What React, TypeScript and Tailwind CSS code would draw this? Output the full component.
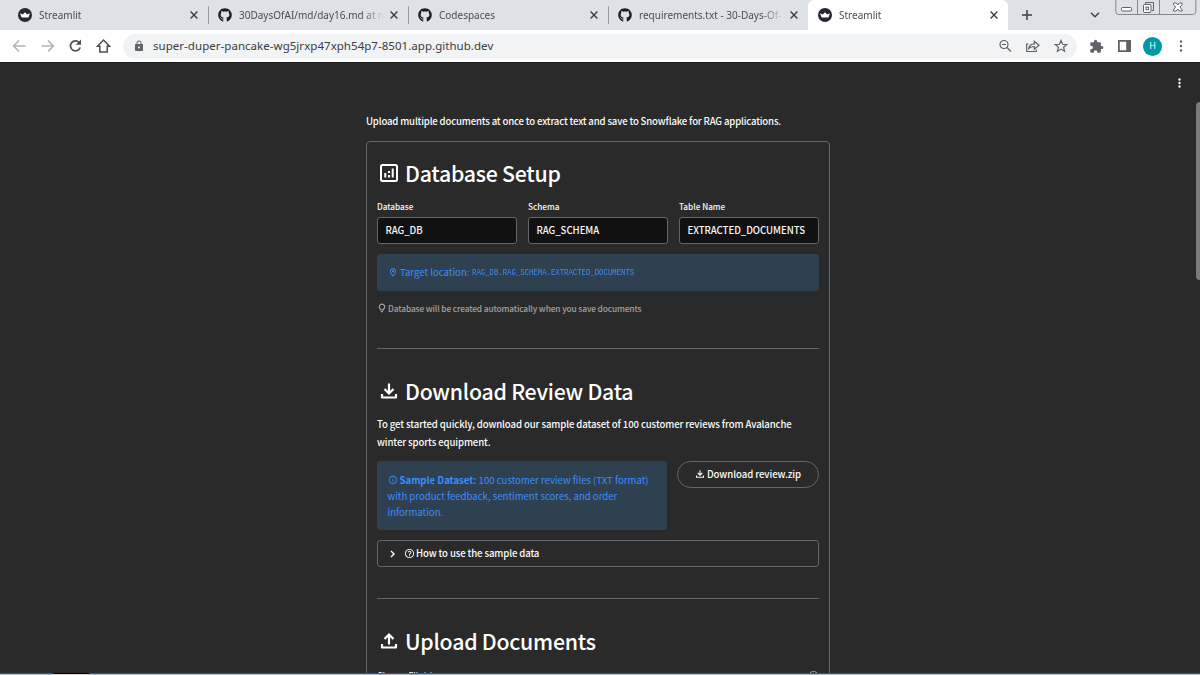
import type { ReactNode } from "react";
import { FaGithub } from "react-icons/fa";
import {
  MdExtension,
  MdHelpOutline,
  MdLock,
  MdOutlineInfo,
  MdOutlineLocationOn,
} from "react-icons/md";

type TabInfo = {
  title: string;
  icon: "streamlit" | "github";
  active?: boolean;
};

const tabs: TabInfo[] = [
  { title: "Streamlit", icon: "streamlit" },
  { title: "30DaysOfAI/md/day16.md at n", icon: "github" },
  { title: "Codespaces", icon: "github" },
  { title: "requirements.txt - 30-Days-Of-", icon: "github" },
  { title: "Streamlit", icon: "streamlit", active: true },
];

const fields = [
  { label: "Database", value: "RAG_DB" },
  { label: "Schema", value: "RAG_SCHEMA" },
  { label: "Table Name", value: "EXTRACTED_DOCUMENTS" },
];

function CrownIcon() {
  return (
    <svg viewBox="0 0 14 14" className="h-[14px] w-[14px] shrink-0">
      <circle cx="7" cy="7" r="7" fill="#262730" />
      <path d="M2 5.200 4.800 6.400 7 4.200l2.200 2.200L12 5.200l-1.600 4.300H3.600z" fill="#fff" />
    </svg>
  );
}

function CloseIcon() {
  return (
    <svg viewBox="0 0 8 8" className="h-2 w-2 shrink-0" fill="none" stroke="#3c4043" strokeWidth="1.400">
      <path d="M.6.6l6.800 6.800M7.400.6.6 7.400" />
    </svg>
  );
}

function AnalyticsIcon() {
  return (
    <svg viewBox="0 0 20 20" className="h-5 w-5" fill="none" stroke="currentColor" strokeWidth="2">
      <rect x="2" y="2" width="16" height="16" rx="1.500" />
      <path d="M6.300 10v4.500M13.700 5.500v9M10 12v2.500M10 8v2" />
    </svg>
  );
}

function TrayIcon({ up, className }: { up?: boolean; className: string }) {
  return (
    <svg viewBox="0 0 20 20" className={className} fill="none" stroke="currentColor" strokeWidth="2.200">
      <path d={up ? "M10 13.500V4M5.500 8 10 3.500 14.500 8" : "M10 2.500V12M5.500 8 10 12.500 14.500 8"} />
      <path d="M3 13v3.500h14V13" strokeLinejoin="round" />
    </svg>
  );
}

function Tab({ tab }: { tab: TabInfo }) {
  return (
    <div
      className={
        tab.active
          ? "flex h-[30px] w-[200px] items-center rounded-t-[6px] bg-white px-[10px]"
          : "flex h-[30px] w-[200px] items-center px-[10px]"
      }
    >
      {tab.icon === "github" ? (
        <FaGithub className="h-[14px] w-[14px] shrink-0 text-[#1b1f23]" />
      ) : (
        <CrownIcon />
      )}
      <span className="ml-[7px] w-[147px] shrink-0 whitespace-nowrap text-[10px] leading-[16px] text-[#4a4d51] [mask-image:linear-gradient(to_right,black_122px,transparent_146px)]">
        {tab.title}
      </span>
      <span className="ml-[4px]">
        <CloseIcon />
      </span>
    </div>
  );
}

function WindowControls() {
  return (
    <svg viewBox="0 0 84 16" className="h-4 w-[84px]" fill="none" stroke="#85888d">
      <path d="M.8 0v11.500q0 3 3 3h74q3 0 3-3V0M22.500 0v14.500M44.500 0v14.500" />
      <g stroke="#5f6368">
        <rect x="6.500" y="7.500" width="10" height="3.500" rx="1" fill="#fff" />
        <path d="M30.500 4v-1.500h8v8H37" />
        <rect x="28.500" y="4.500" width="7.500" height="8" rx="1" fill="#fff" />
        <rect x="31" y="7.200" width="2.500" height="2.500" />
        <path
          d="M58.500 3h2.700l1.600 2 1.600-2h2.700v1.500L65 7l2.100 2.700V11h-2.700l-1.600-2-1.600 2h-2.700V9.700L60.600 7l-2.100-2.500z"
          fill="#fff"
        />
      </g>
    </svg>
  );
}

function TabStrip() {
  return (
    <div className="flex h-[30px] bg-[#dee1e6] pl-2">
      {tabs.map((tab, i) => (
        <div key={i} className="relative">
          <Tab tab={tab} />
          {i < 3 && <span className="absolute right-[-1px] top-[6px] h-[18px] w-px bg-[#9a9da1]" />}
        </div>
      ))}
      <svg viewBox="0 0 10 10" className="ml-[14px] mt-[10px] h-[10px] w-[10px]" stroke="#3c4043" strokeWidth="1.500">
        <path d="M5 0v10M0 5h10" />
      </svg>
      <svg
        viewBox="0 0 10 6"
        className="ml-[58px] mt-[12px] h-[6px] w-[10px]"
        fill="none"
        stroke="#3c4043"
        strokeWidth="1.500"
      >
        <path d="M1 .8l4 4 4-4" />
      </svg>
      <div className="ml-[15px]">
        <WindowControls />
      </div>
    </div>
  );
}

function Toolbar() {
  return (
    <div className="flex h-8 items-center bg-white pl-[12px]">
      <svg viewBox="0 0 100 18" className="h-[18px] w-[100px] shrink-0" fill="none" strokeWidth="1.500">
        <g stroke="#b0b2b5">
          <path d="M13.500 9H2M7 3.500 1.500 9 7 14.500M29.500 9H41M36 3.500 41.500 9 36 14.500" />
        </g>
        <g stroke="#4b4e52">
          <path d="M67.200 5.500A5 5 0 1 0 68.200 10.500" strokeWidth="1.700" />
          <path d="M69 2.500v5.200h-5.200z" fill="#4b4e52" stroke="none" />
          <path d="M85.500 9.300 91.500 3l6 6.300h-2.300V15h-7.400V9.300z" />
        </g>
      </svg>
      <div className="ml-[11px] flex h-[25px] w-[954px] items-center rounded-full bg-[#f1f3f4] pl-[10px] pr-[8px]">
        <MdLock className="h-[12px] w-[12px] text-[#5f6368]" />
        <span className="ml-[8px] whitespace-nowrap text-[11.500px] leading-[16px] tracking-[0.040px] text-[#3a3d41]">
          super-duper-pancake-wg5jrxp47xph54p7-8501.app.github.dev
        </span>
        <svg viewBox="0 0 70 14" className="ml-auto h-[14px] w-[70px]" fill="none" stroke="#5f6368" strokeWidth="1.200">
          <circle cx="5" cy="5.500" r="4" />
          <path d="M3 5.500h4M8 8.500l4 4M29.500 5H27.700v7.500h9.500V10.500M29.800 9.500c.5-3 2.500-4.500 5.500-4.600V2.200l4.700 4-4.700 4V7.500c-2.500 0-4 .5-5.500 2z" />
          <path d="M62 1.500l1.600 3.800 4.100.3-3.100 2.700 1 4-3.600-2.200-3.600 2.200 1-4-3.100-2.700 4.100-.3z" />
        </svg>
      </div>
      <MdExtension className="ml-[12px] h-[15px] w-[15px] text-[#5f6368]" />
      <svg viewBox="0 0 13 12" className="ml-[14px] h-3 w-[13px]">
        <path d="M0 0h13v12H0zM1.800 1.800v8.400h6.400V1.800z" fill="#5f6368" fillRule="evenodd" />
      </svg>
      <span className="ml-[12px] flex h-[19px] w-[19px] items-center justify-center rounded-full bg-[#0097a7] text-[9px] text-white">
        H
      </span>
      <svg viewBox="0 0 4 14" className="ml-[17px] h-[14px] w-1" fill="#5f6368">
        <circle cx="2" cy="2.500" r="1.200" />
        <circle cx="2" cy="7" r="1.200" />
        <circle cx="2" cy="11.500" r="1.200" />
      </svg>
    </div>
  );
}

function SectionTitle({ icon, children }: { icon: ReactNode; children: ReactNode }) {
  return (
    <h2 className="flex h-8 items-center whitespace-nowrap pb-[2px] text-[21.300px] font-medium leading-8 tracking-[-0.250px] text-white">
      <span className="ml-[2px] mr-[6px]">{icon}</span>
      {children}
    </h2>
  );
}

function DatabaseSetup() {
  return (
    <section className="flex flex-col">
      <SectionTitle icon={<AnalyticsIcon />}>Database Setup</SectionTitle>
      <div className="mt-[9px] grid grid-cols-3 gap-[11px]">
        {fields.map((f) => (
          <label key={f.label} className="flex flex-col">
            <span className="h-[18px] text-[8.200px] font-medium leading-[15px]">{f.label}</span>
            <span className="flex h-[27px] items-center rounded-[3px] border border-[#666] bg-[#111] pl-[7.500px] text-[9.600px] font-medium tracking-[-0.030px]">
              {f.value}
            </span>
          </label>
        ))}
      </div>
      <div className="mt-[10px] flex h-[37px] items-center whitespace-nowrap rounded-[3px] bg-[#2f4051] pl-[11px] text-[9.600px] text-[#3b8eff]">
        <MdOutlineLocationOn className="mr-[2px] h-[11px] w-[10px]" />
        Target location:
        <code className="ml-[3px] mt-[2px] origin-left scale-x-[0.850] font-['Liberation_Mono',monospace] text-[8.600px]">
          RAG_DB.RAG_SCHEMA.EXTRACTED_DOCUMENTS
        </code>
      </div>
      <div className="mt-[9px] flex h-4 items-center whitespace-nowrap text-[8.400px] font-medium tracking-[-0.140px] text-[#a3a3a3]">
        <svg viewBox="0 0 10 10" className="mr-px h-[10px] w-[10px]" fill="none" stroke="currentColor" strokeWidth="1.200">
          <path d="M3.700 7V6.200a2.700 2.700 0 1 1 2.600 0V7z" />
          <path d="M4 8.700h2" />
        </svg>
        Database will be created automatically when you save documents
      </div>
    </section>
  );
}

function DownloadData() {
  return (
    <section className="flex flex-col">
      <SectionTitle icon={<TrayIcon className="h-5 w-5" />}>Download Review Data</SectionTitle>
      <p className="mt-2 whitespace-nowrap text-[9.600px] font-medium leading-[17.500px] tracking-[-0.110px]">
        To get started quickly, download our sample dataset of 100 customer reviews from Avalanche
        <br />
        winter sports equipment.
      </p>
      <div className="mt-[10px] flex items-start justify-between">
        <div className="h-[69px] w-[290px] whitespace-nowrap rounded-[3px] bg-[#2f4051] pl-[10.500px] pt-[10.500px] text-[9.600px] leading-4 tracking-[-0.010px] text-[#3b8eff]">
          <MdOutlineInfo className="mr-[2px] inline h-[10px] w-[10px] align-[-1.500px]" />
          <b>Sample Dataset:</b> 100 customer review files (TXT format)
          <br />
          with product feedback, sentiment scores, and order
          <br />
          information.
        </div>
        <button className="flex h-[27px] w-[142px] items-center justify-center whitespace-nowrap rounded-full border border-[#666] pb-px text-[9.600px] font-medium tracking-[-0.060px]">
          <TrayIcon className="mr-[2px] h-[10px] w-[10px]" />
          Download review.zip
        </button>
      </div>
      <div className="mt-[10px] flex h-[27px] items-center whitespace-nowrap rounded-[3px] border border-[#666] pb-px pl-[12px] text-[9.600px] font-medium tracking-[-0.120px]">
        <svg viewBox="0 0 5 8" className="mt-[2px] h-2 w-[5px]" fill="none" stroke="#fff" strokeWidth="1.400">
          <path d="M1 1l3 3-3 3" />
        </svg>
        <MdHelpOutline className="ml-[9px] mr-[1px] h-[11px] w-[11px]" />
        How to use the sample data
      </div>
    </section>
  );
}

export default function App() {
  return (
    <div className="flex h-[675px] w-[1200px] flex-col overflow-hidden bg-[#2a2a2a] font-['Noto_Sans','Open_Sans',sans-serif]">
      <TabStrip />
      <Toolbar />
      <main className="relative flex h-[611px] flex-col items-start overflow-hidden border-t border-[#1b1b1b] pl-[366px] font-['Noto_Sans_CJK_SC',sans-serif] text-[#fafafa]">
        <p className="mt-[50px] h-4 whitespace-nowrap text-[9.600px] font-medium leading-4 tracking-[-0.170px]">
          Upload multiple documents at once to extract text and save to Snowflake for RAG applications.
        </p>
        <div className="mt-[12px] h-[600px] w-[464px] shrink-0 rounded-[4px] border border-[#666] px-[10px] pt-4">
          <DatabaseSetup />
          <hr className="mb-[27px] mt-[32px] border-[#666]" />
          <DownloadData />
          <hr className="mb-[27px] mt-[31px] border-[#666]" />
          <SectionTitle icon={<TrayIcon up className="h-5 w-5" />}>Upload Documents</SectionTitle>
          <div className="mt-[9px] flex items-center justify-between text-[8.400px] font-medium leading-[16px]">
            Choose File(s)
            <MdHelpOutline className="h-[11px] w-[11px] text-[#aaa]" />
          </div>
        </div>
        <svg viewBox="0 0 3 10" className="absolute right-[19px] top-[15px] h-[10px] w-[3px]" fill="#fff">
          <circle cx="1.500" cy="1.500" r="1.200" />
          <circle cx="1.500" cy="5" r="1.200" />
          <circle cx="1.500" cy="8.500" r="1.200" />
        </svg>
        <span className="absolute right-0 top-[39px] h-[178px] w-[4px] rounded-l-sm bg-[#7b7b7b]" />
      </main>
      {/* top edge of the taskbar */}
      <div className="flex h-[2px] border-t border-[#4b5460] bg-[#a9bcd6] pl-[53px]">
        <span className="-mt-px h-[2px] w-[36px] border-t border-black bg-[#e4dcdc]" />
      </div>
    </div>
  );
}
